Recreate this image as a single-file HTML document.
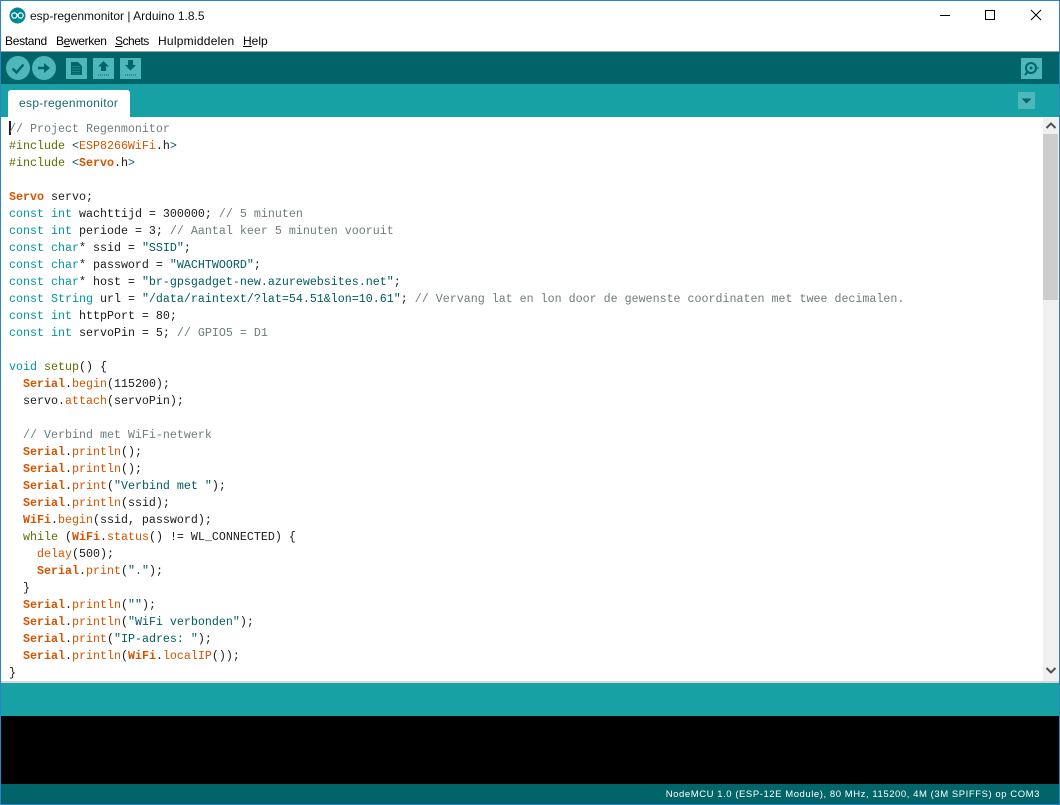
<!DOCTYPE html>
<html><head><meta charset="utf-8">
<style>
html,body{margin:0;padding:0;background:#fff}
#w{position:relative;width:1060px;height:805px;overflow:hidden;background:#fff;font-family:"Liberation Sans",sans-serif}
.a{position:absolute}
#code{position:absolute;left:9px;top:121px;margin:0;font:11.67px/17px "Liberation Mono",monospace;color:#1a1a1a;white-space:pre}
.k{color:#00979c}.o{color:#d35400}.b{color:#d35400;font-weight:bold}.c{color:#6f7c7d}.g{color:#5e6d03}.s{color:#005c5f}
.m{position:absolute;top:34px;font-size:12px;line-height:14px;color:#000;white-space:nowrap}
u{text-decoration:underline}
</style></head><body><div id="w">
<div class="a" style="left:0;top:51px;width:1060px;height:1px;background:#a0a0a0"></div>
<div class="a" style="left:0;top:52px;width:1060px;height:32px;background:#006468"></div>
<div class="a" style="left:0;top:84px;width:1060px;height:33px;background:#17a1a5"></div>
<div class="a" style="left:0;top:681px;width:1060px;height:2px;background:#d8d8d8"></div>
<div class="a" style="left:0;top:683px;width:1060px;height:33px;background:#17a1a5"></div>
<div class="a" style="left:0;top:716px;width:1060px;height:68px;background:#000"></div>
<div class="a" style="left:0;top:784px;width:1060px;height:20px;background:#006468"></div>

<svg class="a" style="left:9px;top:7px" width="17" height="17" viewBox="0 0 17 17"><circle cx="8.5" cy="8.5" r="8" fill="#00878f"/><circle cx="5.4" cy="8.5" r="2.6" fill="none" stroke="#fff" stroke-width="1.2"/><circle cx="11.6" cy="8.5" r="2.6" fill="none" stroke="#fff" stroke-width="1.2"/></svg>
<div class="a" style="left:30px;top:9px;font-size:12px;line-height:14px;color:#111;white-space:nowrap">esp-regenmonitor | Arduino 1.8.5</div>
<svg class="a" style="left:930px;top:5px" width="120" height="22" viewBox="0 0 120 22" fill="none" stroke="#000" stroke-width="1"><path d="M10 10.5H20"/><rect x="55.5" y="5.5" width="9" height="9"/><path d="M101 5L111 15M111 5L101 15"/></svg>

<div class="m" style="left:5px;letter-spacing:-.3px">Bestand</div>
<div class="m" style="left:56px;letter-spacing:-.35px">B<u>e</u>werken</div>
<div class="m" style="left:115px;letter-spacing:-.5px"><u>S</u>chets</div>
<div class="m" style="left:158px;letter-spacing:.25px">Hulpmiddelen</div>
<div class="m" style="left:243px"><u>H</u>elp</div>

<svg class="a" style="left:0;top:52px" width="150" height="32" viewBox="0 0 150 32">
<circle cx="18" cy="16" r="12" fill="#4db7bb"/><path d="M12.5 16.5L16.5 20.5L23.5 12.5" fill="none" stroke="#006468" stroke-width="2.4"/>
<circle cx="44" cy="16" r="12" fill="#4db7bb"/><path d="M38 14.7H44V11L50 16L44 21V17.3H38Z" fill="#006468"/>
<rect x="66" y="6" width="21" height="21" fill="#4db7bb"/><path d="M71 10H78L82 14V23H71Z" fill="#006468"/><path d="M72.5 14.5H80.5M72.5 17H80.5M72.5 19.5H80.5M72.5 22H80.5" stroke="#4db7bb" stroke-width=".7" stroke-dasharray="1 1"/>
<rect x="93" y="6" width="21" height="21" fill="#4db7bb"/><path d="M103.5 9L109 14.5H106V19H101V14.5H98Z" fill="#006468"/><path d="M98 23H109" stroke="#006468" stroke-dasharray="1 1"/>
<rect x="120" y="6" width="21" height="21" fill="#4db7bb"/><path d="M128 8H133V13H136L130.5 18.5L125 13H128Z" fill="#006468"/><path d="M125 23H136" stroke="#006468" stroke-dasharray="1 1"/>
</svg>
<svg class="a" style="left:1021px;top:58px" width="21" height="21" viewBox="0 0 21 21"><rect width="21" height="21" fill="#4db7bb"/><circle cx="10" cy="10" r="5" fill="none" stroke="#006468" stroke-width="2"/><circle cx="10" cy="10" r="1.5" fill="#006468"/><path d="M6.5 14L4 17" stroke="#006468" stroke-width="2"/><path d="M15 10H18" stroke="#006468"/></svg>

<div class="a" style="left:8px;top:90px;width:122px;height:27px;background:#fff;border-radius:3px 3px 0 0"></div>
<div class="a" style="left:19px;top:96px;font-size:12px;line-height:14px;color:#17696d;letter-spacing:.32px;white-space:nowrap">esp-regenmonitor</div>
<svg class="a" style="left:1018px;top:92px" width="17" height="17" viewBox="0 0 17 17"><rect width="17" height="17" fill="#4db7bb"/><path d="M3.5 6.5H13.5L8.5 11.5Z" fill="#006468"/></svg>

<div class="a" style="left:9px;top:121px;width:2px;height:14px;background:#222"></div>
<pre id="code"><span class="c">// Project Regenmonitor</span>
<span class="g">#include</span> <span class="s">&lt;</span><span class="o">ESP8266WiFi</span>.h<span class="s">&gt;</span>
<span class="g">#include</span> <span class="s">&lt;</span><span class="b">Servo</span>.h<span class="s">&gt;</span>

<span class="b">Servo</span> servo;
<span class="k">const</span> <span class="k">int</span> wachttijd = 300000; <span class="c">// 5 minuten</span>
<span class="k">const</span> <span class="k">int</span> periode = 3; <span class="c">// Aantal keer 5 minuten vooruit</span>
<span class="k">const</span> <span class="k">char</span>* ssid = <span class="s">"SSID"</span>;
<span class="k">const</span> <span class="k">char</span>* password = <span class="s">"WACHTWOORD"</span>;
<span class="k">const</span> <span class="k">char</span>* host = <span class="s">"br-gpsgadget-new.azurewebsites.net"</span>;
<span class="k">const</span> <span class="k">String</span> url = <span class="s">"/data/raintext/?lat=54.51&amp;lon=10.61"</span>; <span class="c">// Vervang lat en lon door de gewenste coordinaten met twee decimalen.</span>
<span class="k">const</span> <span class="k">int</span> httpPort = 80;
<span class="k">const</span> <span class="k">int</span> servoPin = 5; <span class="c">// GPIO5 = D1</span>

<span class="k">void</span> <span class="g">setup</span>() {
  <span class="b">Serial</span>.<span class="o">begin</span>(115200);
  servo.<span class="o">attach</span>(servoPin);

  <span class="c">// Verbind met WiFi-netwerk</span>
  <span class="b">Serial</span>.<span class="o">println</span>();
  <span class="b">Serial</span>.<span class="o">println</span>();
  <span class="b">Serial</span>.<span class="o">print</span>(<span class="s">"Verbind met "</span>);
  <span class="b">Serial</span>.<span class="o">println</span>(ssid);
  <span class="b">WiFi</span>.<span class="o">begin</span>(ssid, password);
  <span class="g">while</span> (<span class="b">WiFi</span>.<span class="o">status</span>() != WL_CONNECTED) {
    <span class="o">delay</span>(500);
    <span class="b">Serial</span>.<span class="o">print</span>(<span class="s">"."</span>);
  }
  <span class="b">Serial</span>.<span class="o">println</span>(<span class="s">""</span>);
  <span class="b">Serial</span>.<span class="o">println</span>(<span class="s">"WiFi verbonden"</span>);
  <span class="b">Serial</span>.<span class="o">print</span>(<span class="s">"IP-adres: "</span>);
  <span class="b">Serial</span>.<span class="o">println</span>(<span class="b">WiFi</span>.<span class="o">localIP</span>());
}</pre>

<div class="a" style="left:1043px;top:117px;width:16px;height:564px;background:#f0f0f0"></div>
<div class="a" style="left:1043px;top:134px;width:15px;height:166px;background:#cdcdcd"></div>
<svg class="a" style="left:1043px;top:120px" width="16" height="12" viewBox="0 0 16 12" fill="none" stroke="#505050" stroke-width="2"><path d="M3.5 8L8 3.5L12.5 8"/></svg>
<svg class="a" style="left:1043px;top:664px" width="16" height="12" viewBox="0 0 16 12" fill="none" stroke="#505050" stroke-width="2"><path d="M3.5 4L8 8.5L12.5 4"/></svg>

<div class="a" style="right:20px;top:789px;font-size:9.5px;line-height:12px;color:#fff;letter-spacing:.56px;white-space:nowrap">NodeMCU 1.0 (ESP-12E Module), 80 MHz, 115200, 4M (3M SPIFFS) op COM3</div>

<div class="a" style="left:0;top:0;width:1060px;height:1px;background:#2b82c4"></div>
<div class="a" style="left:0;top:804px;width:1060px;height:1px;background:#2b82c4"></div>
<div class="a" style="left:0;top:0;width:1px;height:805px;background:#2b82c4"></div>
<div class="a" style="left:1059px;top:0;width:1px;height:805px;background:#2b82c4"></div>
</div></body></html>
